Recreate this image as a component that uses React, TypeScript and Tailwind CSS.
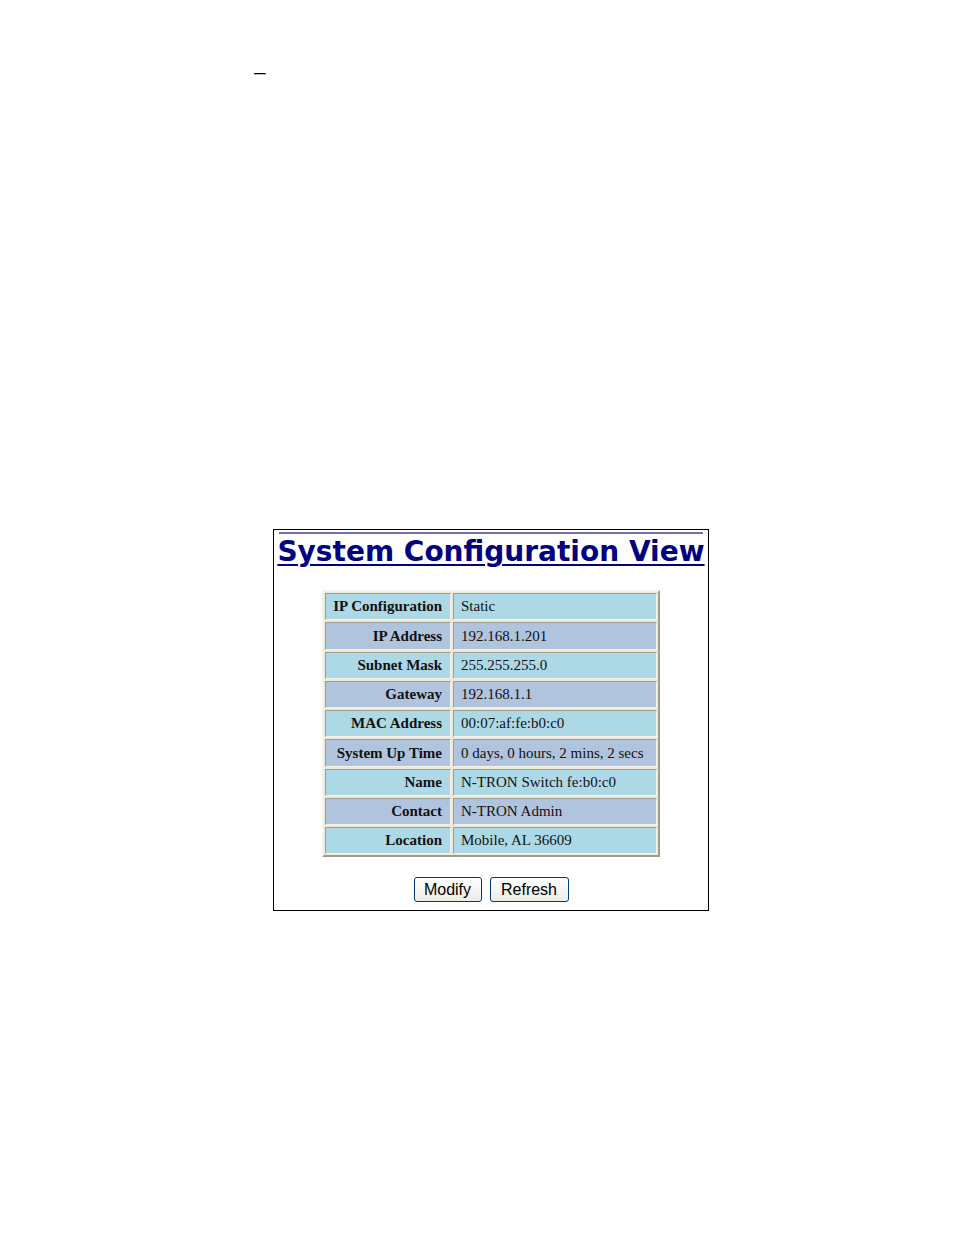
import React from "react";

const rows: [string, string][] = [
  ["IP Configuration", "Static"],
  ["IP Address", "192.168.1.201"],
  ["Subnet Mask", "255.255.255.0"],
  ["Gateway", "192.168.1.1"],
  ["MAC Address", "00:07:af:fe:b0:c0"],
  ["System Up Time", "0 days, 0 hours, 2 mins, 2 secs"],
  ["Name", "N-TRON Switch fe:b0:c0"],
  ["Contact", "N-TRON Admin"],
  ["Location", "Mobile, AL 36609"],
];

export default function App() {
  return (
    <div className="w-[954px] h-[1235px] bg-white relative overflow-hidden">
      <div className="pt-[61px] pl-[254px] h-[529px] font-['Liberation_Sans',sans-serif] text-[21px] leading-[21px] text-black">
        <span>–</span>
      </div>
      <div className="ml-[273px] w-[436px] h-[382px] border border-black flex flex-col items-center">
        <div className="mt-[2px] w-[424px] h-[2px] bg-[#7070b0]" />
        <div className="mt-[3px] font-['DejaVu_Sans',sans-serif] font-bold text-[28px] leading-[30px] text-[#000080] underline decoration-[2px] underline-offset-[3px]">
          System Configuration View
        </div>
        <div className="mt-[23px] self-start ml-[48px] border-2 border-t-[#f4f2ea] border-l-[#f4f2ea] border-b-[#a29c8e] border-r-[#a29c8e] bg-[#ece9d8] p-[1px]">
          <div className="grid grid-cols-[126px_204px] gap-[2px] font-['Liberation_Serif',serif] text-[15px] text-[#111]">
            {rows.map(([k, v], i) => {
              const bg = i % 2 === 0 ? "bg-[#add8e6]" : "bg-[#b0c4de]";
              return (
                <React.Fragment key={k}>
                  <div className={`${bg} h-[27.25px] flex items-center justify-end pr-[8px] font-bold whitespace-nowrap border border-t-[#a29c8e] border-l-[#a29c8e] border-b-[#f4f2ea] border-r-[#f4f2ea]`}>
                    {k}
                  </div>
                  <div className={`${bg} h-[27.25px] flex items-center pl-[7px] whitespace-nowrap border border-t-[#a29c8e] border-l-[#a29c8e] border-b-[#f4f2ea] border-r-[#f4f2ea]`}>
                    {v}
                  </div>
                </React.Fragment>
              );
            })}
          </div>
        </div>
        <div className="mt-[20px] flex gap-[8px] font-['Liberation_Sans',sans-serif] text-[16px] text-black">
          <button className="w-[68px] h-[25px] rounded-[3px] border border-[#003c74] bg-gradient-to-b from-[#ffffff] to-[#ecebe6] leading-none">
            Modify
          </button>
          <button className="w-[79px] h-[25px] rounded-[3px] border border-[#003c74] bg-gradient-to-b from-[#ffffff] to-[#ecebe6] leading-none">
            Refresh
          </button>
        </div>
      </div>
    </div>
  );
}
